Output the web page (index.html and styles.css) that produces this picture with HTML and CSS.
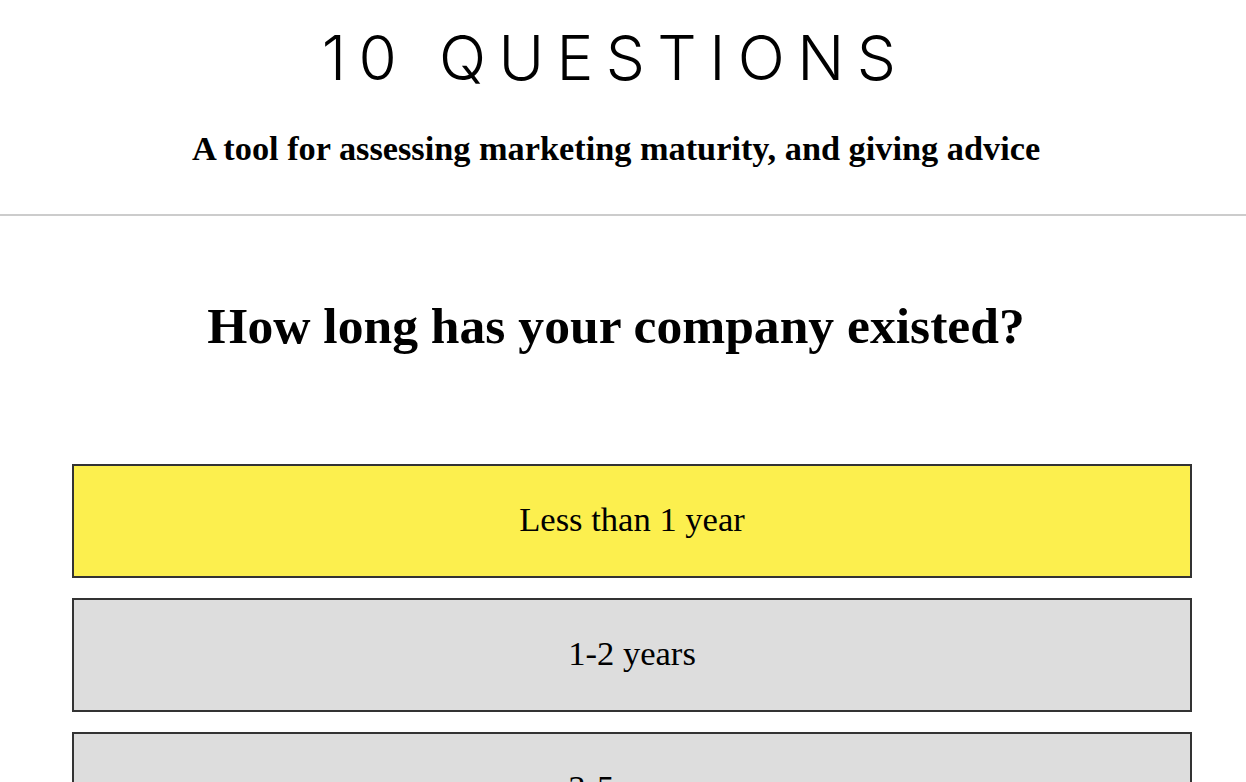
FILE: index.html
```html
<!DOCTYPE html>
<html lang="en">
<head>
<meta charset="utf-8">
<title>10 Questions</title>
<link rel="stylesheet" href="styles.css">
</head>
<body>
<header class="site-header">
  <h1 class="brand">10 QUESTIONS</h1>
  <p class="tagline">A tool for assessing marketing maturity, and giving advice</p>
</header>
<main class="quiz">
  <h2 class="question">How long has your company existed?</h2>
  <div class="options">
    <button class="option selected">Less than 1 year</button>
    <button class="option">1-2 years</button>
    <button class="option">3-5 years</button>
    <button class="option">More than 5 years</button>
  </div>
</main>
</body>
</html>
```
FILE: styles.css
```css
html, body {
  margin: 0;
  padding: 0;
  background: #fff;
  color: #000;
}
body {
  font-family: "Liberation Serif", "Times New Roman", serif;
  overflow: hidden;
  height: 782px;
}
.site-header {
  border-bottom: 2px solid #cccccc;
  text-align: center;
  padding: 22px 0 0;
  height: 216px;
  box-sizing: border-box;
}
.brand {
  margin: 0;
  font-family: Inter, "Noto Sans", sans-serif;
  font-weight: 300;
  font-size: 62px;
  line-height: 72px;
  letter-spacing: 0.2em;
  padding-right: 16px;
}
.tagline {
  margin: 33px 0 0;
  font-weight: bold;
  font-size: 34.3px;
  line-height: 42px;
  padding-right: 14px;
}
.quiz {
  padding: 0 54px 0 72px;
}
.question {
  margin: 80px 0 0;
  text-align: center;
  font-size: 51.6px;
  line-height: 60px;
  font-weight: bold;
  padding-right: 32px;
}
.options {
  margin-top: 108px;
  display: flex;
  flex-direction: column;
  gap: 20px;
}
.option {
  display: block;
  width: 100%;
  height: 114px;
  border: 2px solid #333333;
  background: #dddddd;
  font-family: "Liberation Serif", "Times New Roman", serif;
  font-size: 34.6px;
  color: #000;
  text-align: center;
  padding: 0 0 4px;
  cursor: pointer;
}
.option.selected {
  background: #fcef4e;
}
```
